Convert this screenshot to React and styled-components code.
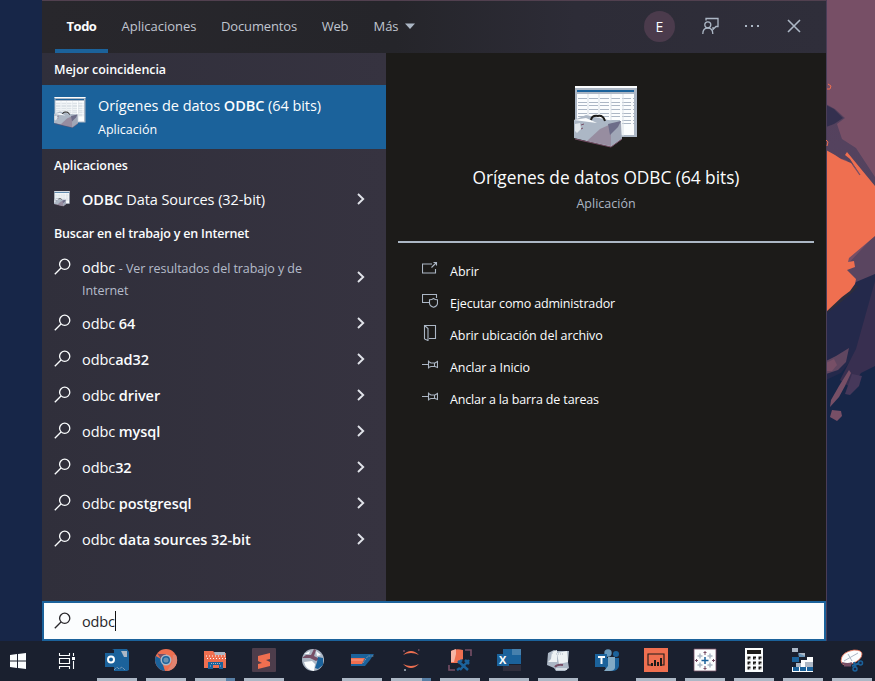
import React from "react";
import styled, { createGlobalStyle } from "styled-components";

const c = {
  ink: "#1c1b19", panel: "#302f3b", blue: "#1b629b", navy: "#172648",
  plum: "#774f66", coral: "#ef6f50", mist: "#acb7c5", white: "#fbfdfe",
};

const Global = createGlobalStyle`
  * { box-sizing: border-box; }
  body { margin: 0; overflow: hidden; background: ${c.navy}; font-family: "Open Sans", "Noto Sans", sans-serif; }
  svg { display: block; flex: none; }
`;

const Desktop = styled.div`
  width: 875px; height: 681px; display: grid; grid-template-rows: 641px 40px;
  background: ${c.navy}; color: ${c.white};
`;
const Stage = styled.div`
  display: grid; grid-template-columns: 42px 784px 49px;
`;
const SearchWindow = styled.section`
  grid-column: 2; display: grid; grid-template-rows: 52px 548px 40px;
  border-top: 1px solid #51404f;
`;
const Header = styled.header`
  display: flex; justify-content: space-between;
  background: linear-gradient(90deg, #28272c 0, #25252a 45%, #2d2c37 68%, #2f2e3a 100%);
`;
const Tabs = styled.nav`display: flex; padding-left: 13px;`;
const Tab = styled.div`
  display: flex; align-items: center; justify-content: center; gap: 6px;
  width: ${p => p.$w}px; margin-right: ${p => p.$gap || 0}px; padding-bottom: 2px;
  font-size: 13px; letter-spacing: ${p => p.$ls || 0}px; white-space: nowrap;
  font-weight: ${p => (p.$active ? 700 : 400)}; color: ${p => (p.$active ? c.white : "#c0c5d0")};
  box-shadow: ${p => (p.$active ? `inset 0 -4px ${c.blue}` : "none")};
`;
const Tools = styled.div`display: flex; align-items: center; padding: 0 25px 2px 0;`;
const Avatar = styled.div`
  width: 31px; height: 31px; margin-right: 27px; border-radius: 50%; background: #4b3b4c;
  display: grid; place-items: center; font-size: 14px;
`;
const ToolIcon = styled.svg`margin-right: ${p => p.$gap || 0}px;`;

const Content = styled.div`display: grid; grid-template-columns: 344px 440px;`;
const Results = styled.div`background: linear-gradient(90deg, #302f3b, #363340);`;
const Heading = styled.h2`
  margin: 0; height: 32px; padding: 0 12px; display: flex; align-items: center;
  font-size: 12.5px; font-weight: 600; letter-spacing: ${p => p.$ls || 0}px; white-space: nowrap;
`;
const BestMatch = styled.div`
  height: 64px; padding: 8px 12px; display: flex; gap: 12px; background: ${c.blue};
  > svg { margin-top: 4px; }
`;
const MatchText = styled.div`padding-top: 1px; white-space: nowrap;`;
const MatchTitle = styled.div`font-size: 14.5px; line-height: 24px; letter-spacing: -0.06px;
  b { font-weight: 600; }`;
const MatchKind = styled.div`font-size: 12.5px; line-height: 24px;`;
const Row = styled.div`
  height: ${p => (p.$tall ? 56 : 36)}px; display: flex; align-items: center;
  padding: 0 21px 0 12px; font-size: 14.5px;
`;
const RowIcon = styled.div`width: 28px; align-self: ${p => (p.$top ? "flex-start" : "center")};
  padding-top: ${p => (p.$top ? 9 : 0)}px;`;
const RowText = styled.div`
  flex: 1; line-height: 21px; white-space: nowrap; letter-spacing: -0.07px;
  padding-top: ${p => (p.$low ? 3 : 0)}px;
  b { font-weight: 600; }
`;
const Hint = styled.span`font-size: 12.5px; color: #b5bcca; letter-spacing: -0.06px;`;

const Details = styled.div`
  background: ${c.ink}; padding: 33px 12px 0; display: flex; flex-direction: column; align-items: stretch;
`;
const Hero = styled.div`
  height: 155px; display: flex; flex-direction: column; align-items: center; white-space: nowrap;
`;
const HeroTitle = styled.div`margin-top: 14px; font-size: 17.3px; line-height: 28px; letter-spacing: -0.02px;`;
const HeroKind = styled.div`font-size: 12.5px; line-height: 23px; color: ${c.mist};`;
const Divider = styled.div`height: 2px; background: ${c.mist};`;
const Actions = styled.div`padding: 12px 0 0 24px;`;
const Action = styled.div`
  height: 32px; display: flex; align-items: center; gap: 12px; font-size: 12.5px;
  letter-spacing: ${p => p.$ls || 0}px; white-space: nowrap;
  svg { margin-top: -4px; }
`;

const SearchBar = styled.div`
  display: flex; align-items: center; padding-left: 10px;
  border: 2px solid ${c.blue}; background: ${c.white}; color: #28272b; font-size: 14.5px;
`;
const Query = styled.span`padding-left: 10px; letter-spacing: -0.15px;`;
const Caret = styled.span`width: 1px; height: 20px; background: #111;`;

const Taskbar = styled.footer`display: flex; background: #1a202f;`;
const SystemButton = styled.div`
  width: ${p => p.$w}px; display: grid; place-items: center;
`;
const AppButton = styled.div`
  width: 40px; height: 40px; margin-right: 9px; flex: none;
  display: grid; grid-template-rows: 37px 3px; justify-items: center;
  svg { margin-top: 7px; }
`;
const OpenMark = styled.div`
  width: 40px; background: ${p => (p.$split
    ? `linear-gradient(90deg, ${c.mist} 31px, #587fa5 31px)`
    : c.mist)};
`;

const Magnifier = ({ color = c.white }) => (
  <svg width="18" height="18" viewBox="0 0 18 18" fill="none" stroke={color} strokeWidth="1.3">
    <circle cx="10.7" cy="6.3" r="5.1" /><path d="M7 10 L.8 16.2" />
  </svg>
);
const Chevron = () => (
  <svg width="8" height="12" viewBox="0 0 8 12" fill="none" stroke="#e1e3e9" strokeWidth="1.9">
    <path d="M1 1 L6.2 6 L1 11" />
  </svg>
);

const OdbcIcon = ({ size }) => (
  <svg width={size} height={size} viewBox="0 0 64 64">
    <path d="M1 0h62v51H1z" fill={c.mist} />
    <path d="M1 0h62v2H1zM3 8h57v41H3z" fill={c.white} />
    <path d="M3 4h57v2H3z" fill={c.blue} />
    <path d="M4 12.5h56M4 16.5h56M4 19.5h56M4 23.5h56M4 27.5h56M4 30.5h56M4 34.5h56M4 37.5h56" stroke={c.mist} strokeWidth="1" strokeDasharray="9 2" />
    <path d="M14 8v42M25 8v42M37 8v42M49 8v42" stroke="#dbe1e7" />
    <path d="M0 34L12 29 34 34 47 35 48 53 37 61 0 52z" fill={c.mist} />
    <path d="M0 34L12 32 23 37 15 36z" fill={c.white} />
    <path d="M1 38l5-1 1 6-4 4-2-2z" fill="#e2e7ec" />
    <path d="M26 43L37 38 37 60 13 55z" fill="#978da0" />
    <path d="M37 38L47 35V53L37 60z" fill="#a0a7b7" />
    <path d="M34 38L47 35 44 41 36 49z" fill="#6d6d89" />
    <path d="M7 39l3-1M7 43l2-1" fill="none" stroke={c.plum} />
    <path d="M17 34Q18 29 24 30 29 29 31 35" fill="none" stroke={c.ink} strokeWidth="2" />
    <path d="M1 53L37 61 48 53" fill="none" stroke={c.plum} />
  </svg>
);

const actionDrawings = {
  open: <><path d="M10 3H.5v9h13V8M9.5 6.5L14.5 1.5M11.5 1.5h3v3" /></>,
  admin: <><path d="M7 9.5H.5v-8h14V5" /><path d="M11.5 5.5q2 1.5 4 1.3V10q0 3-4 4.3Q7.5 13 7.5 10V6.8q2 .2 4-1.3z" /></>,
  folder: <><path d="M2.5 14V.5h11v13H7M2.5.5l3.5 3v12L2.5 14" /></>,
  pin: <><path d="M0 7.5h6.5M6.5 3.5v8M6.5 4.5L9 6h4l2.5-1.5v6L13 9.5H9l-2.5 1M12.5 6v3" /></>,
};
const ActionIcon = ({ kind }) => (
  <svg width="16" height="16" viewBox="0 0 16 16" fill="none" stroke={c.mist} strokeWidth="1.1">{actionDrawings[kind]}</svg>
);

const actions = [
  ["open", "Abrir", 0], ["admin", "Ejecutar como administrador", -0.16],
  ["folder", "Abrir ubicación del archivo", -0.08], ["pin", "Anclar a Inicio", -0.08],
  ["pin", "Anclar a la barra de tareas", -0.15],
];
const suggestions = [
  ["odbc ", "64"], ["odbc", "ad32"], ["odbc ", "driver"], ["odbc ", "mysql"],
  ["odbc", "32"], ["odbc ", "postgresql"], ["odbc ", "data sources 32-bit"],
];

const Letter = styled.text`font: 700 ${p => p.$s || 10}px "Open Sans", sans-serif; fill: ${c.white};`;

const apps = [
  { open: true, art: <>
    <path d="M7 0h15l2 3v18l-2 1H9V1z" fill={c.blue} /><path d="M16 2h6v6h-3z" fill={c.mist} />
    <path d="M9 21l3-3 2 2 3-2 3 3" fill="none" stroke={c.mist} strokeDasharray="1 1" />
    <path d="M0 4h12v14H0z" fill={c.blue} /><circle cx="6" cy="10.5" r="3" fill="none" stroke={c.white} strokeWidth="2" /></> },
  { open: true, art: <>
    <circle cx="12" cy="11" r="11" fill={c.coral} /><path d="M1.8 7L7 10l4 12A11 11 0 0 1 1.8 7" fill={c.blue} />
    <path d="M3 4l4 6 5-4V5H5z" fill={c.plum} /><path d="M13 22l5-8 1-8h3a11 11 0 0 1-9 16" fill="#e08471" />
    <circle cx="12" cy="11" r="5.5" fill={c.mist} /><circle cx="12" cy="11" r="4" fill={c.blue} />
    <circle cx="12" cy="11" r="2.6" fill="#6890b2" /></> },
  { open: true, split: true, art: <>
    <path d="M1 2h9l2 2h11v15H1z" fill={c.coral} /><path d="M11 3h11v3H12z" fill={c.mist} />
    <path d="M3 7h19M4 9.5h19" stroke={c.white} strokeDasharray="1 2" />
    <path d="M5 13h15v7h-4v-4h-6v4H5z" fill={c.blue} /><path d="M8 14.5h10M7 17h2M17 17h2" stroke={c.mist} strokeDasharray="1 1" /></> },
  { open: true, art: <>
    <rect y="-1" width="24" height="24" rx="1" fill="#4d3d4b" /><path d="M6 7l12-3v6l-4 1 4 2v4L6 20v-5l4-1-4-2z" fill={c.coral} /></> },
  { art: <>
    <circle cx="12" cy="11" r="11" fill={c.mist} /><path d="M1 9l4-3h5l3-6 2 1-2 6 6 3-4 2-6-3z" fill={c.plum} />
    <path d="M17 8l5 1v7l-5 4-3-1 2-6z" fill={c.blue} /><path d="M3 13l8-1 3 3-1 7Q5 21 3 13M15 2l5 4-4 1z" fill={c.white} />
    <path d="M3 5l6-3-1 3z" fill={c.white} /></> },
  { open: true, art: <>
    <path d="M1 5h23l-4 6-5 6H1z" fill={c.blue} /><path d="M1 9h14l-3 6H1z" fill={c.coral} /><path d="M1 11h12" stroke="#f4a08a" />
    <path d="M13 14l5-7h6" fill="none" stroke="#7796ae" strokeDasharray="2 1" /></> },
  { open: true, split: true, art: <>
    <path d="M4 6Q12-2 20 6q-8-4-16 0zM4 15q8 4 16 0-8 8-16 0z" fill={c.coral} />
    <path d="M4 2h2M19 1h1.5" stroke={c.plum} strokeWidth="1.5" /><path d="M5 21h2" stroke={c.mist} strokeWidth="1.5" /></> },
  { open: true, art: <>
    <path d="M3 2Q8-1 15 1v9l-5 4H3z" fill={c.coral} /><path d="M3 2l5-2v5l-2 8H3z" fill="#f6b5a5" />
    <path d="M17 1h6v6M1 16v5h6" fill="none" stroke={c.plum} strokeWidth="1.6" />
    <path d="M10 12l10 9M21 11l-9 10M10 14l4-3M12 19l-3 2M17 11l4 4" stroke={c.blue} strokeWidth="2.5" /></> },
  { open: true, art: <>
    <path d="M6 0h18v15H6z" fill={c.blue} /><path d="M15 0h9v6h-9z" fill="#4780ad" /><path d="M6 16h18v6H6z" fill="#302f3d" />
    <path d="M0 5h12v12H0z" fill={c.blue} /><Letter x="2" y="15.2" $s="11">X</Letter></> },
  { open: true, art: <>
    <path d="M2 4l6-3 3 1h12l-1 11 1 6-4 3H10l-2-3-7-3z" fill={c.mist} /><path d="M6 3l5-2v12H2l3-3zM11 4l10-2 1 11-9 2z" fill="#eef2f4" />
    <path d="M4 4h4M10 5h8" stroke={c.mist} strokeDasharray="1 1" />
    <path d="M9 18q2-3 8-2" stroke={c.plum} strokeWidth="2" fill="none" /><path d="M10 20h11" stroke="#d4dce3" strokeWidth="2" /></> },
  { art: <>
    <circle cx="13" cy="4" r="3.7" fill="#6799bd" /><circle cx="21" cy="5" r="3" fill={c.blue} /><path d="M9 9h15v8q-1 5-7 5t-8-6z" fill={c.blue} />
    <path d="M13 8h7v11q-1 3-5 3H9l4-5z" fill="#82aac5" /><path d="M0 5h12v13H0z" fill={c.blue} /><path d="M3 8h7M6.5 8v7" stroke={c.white} strokeWidth="2" /></> },
  { open: true, art: <>
    <path d="M0-1h24v24H0z" fill={c.coral} /><path d="M7 16H4V5h16v11h-2" fill="none" stroke={c.ink} strokeWidth="1.1" />
    <path d="M8 17v-3M11 17v-6M14 17v-4M17 17V9" stroke={c.ink} strokeWidth="2" /></> },
  { open: true, art: <>
    <path d="M1 0h22v22H1z" fill={c.white} stroke={c.plum} strokeWidth=".8" /><path d="M12 8v7M8.5 11.5h7" stroke={c.blue} strokeWidth="1.5" />
    <path d="M12 2v4M10.5 3.5h3M12 17v4M10.5 19.5h3M2 11.5h3M3.5 10v3M19 11.5h3M20.5 10v3" stroke={c.plum} strokeWidth="1" />
    <path d="M7 4.5v5M4.5 7h5M17 4.5v5M14.5 7h5M7 13.5v5M4.5 16h5M17 13.5v5M14.5 16h5" stroke={c.mist} strokeWidth="1.5" /></> },
  { open: true, art: <>
    <path d="M3-1h18v24H3z" fill={c.white} /><path d="M5 1h14v4H5z" fill={c.ink} />
    {[7.5, 12.5, 17.5].map(y => <path key={y} d={`M5.5 ${y}h3v3h-3zM11 ${y}h3v3h-3zM16.5 ${y}h3v3h-3z`} fill={c.ink} />)}
    {[10, 15, 20].map(y => <path key={y} d={`M7 ${y}h2M12.5 ${y}h2M18 ${y}h2`} stroke={c.white} />)}</> },
  { open: true, art: <>
    <path d="M1-1h6v4H1zM8 4h6v4H8z" fill={c.mist} /><path d="M7 4l7 3v1H8z" fill="#6895b9" /><path d="M1 8h7v5H1z" fill={c.blue} />
    <path d="M5 14h5v-3h6V8h6v15H1v-5h4z" fill={c.white} /><path d="M14 13h8v5h-8zM5 14h5v4H5z" fill={c.mist} />
    <path d="M2 18h6v4H2zM9 18h6v4H9zM16 18h6v4h-6z" fill={c.blue} /></> },
  { open: true, art: <>
    <path d="M1 12Q1 3 14 1q8 0 8 4 0 6-11 10-9 3-10-3z" fill={c.white} stroke={c.coral} strokeWidth=".8" />
    <path d="M4 12l14-8M8 5l4 7" stroke={c.mist} />
    <path d="M2 14q6 2 10 0M4 16.5h7" fill="none" stroke={c.plum} strokeWidth="2" /><path d="M14 13l2 7M12 17l8-3" stroke={c.blue} strokeWidth="2" />
    <circle cx="20.5" cy="14" r="2" fill={c.navy} stroke={c.blue} strokeWidth="1.5" /><circle cx="15" cy="20" r="2" fill={c.navy} stroke={c.blue} strokeWidth="1.5" /></> },
];

const Wallpaper = () => (
  <svg width="49" height="641" viewBox="0 0 49 641">
    <defs>
      <linearGradient id="slope" x2="0" y2="1"><stop stopColor={c.plum} /><stop offset=".6" stopColor="#493c57" /><stop offset="1" stopColor={c.navy} /></linearGradient>
      <linearGradient id="shade" x2="0" y2="1"><stop stopColor="#55415d" /><stop offset="1" stopColor="#53435f" /></linearGradient>
    </defs>
    <path d="M0 0h49v641H0z" fill={c.navy} />
    <path d="M0 0h49v290H0z" fill={c.plum} />
    <path d="M0 104l9 5 10 9-8 6 5 15 14 9 19 29v12L20 160 0 155z" fill="url(#shade)" />
    <path d="M0 105l8 4 9 9-9 6-8 3z" fill="#34304f" />
    <path d="M49 235v48l-22 14-8-30z" fill="#5a4560" />
    <path d="M30 284l19-7v364H0V314z" fill="url(#navyFade)" />
    <path d="M30 282l19-8v50q-11 15-20 31L15 373 0 380v-66z" fill="#24294b" />
    <path d="M49 281v85l-14 7-10 15-11-8 16-31z" fill="#382f50" />
    <path d="M0 312l20-16 11-10" stroke="#2d2d3c" strokeWidth="3" fill="none" />
    <path d="M0 150l9 5 6 4 10 4 8 10-9-14-5-4 2-3 28 34v50l-26 22-1 4 6-1 1 6-8 3 9 9-1 5-5 7-8 6-16 15z" fill={c.coral} />
    <path d="M27 165l7 10" stroke={c.plum} strokeWidth="1.3" />
    <path d="M0 361l10-5 13-8-3 14-8 8-12 4z" fill="#604660" />
    <path d="M0 363l8-4 3 6-5 6H0z" fill={c.plum} />
    <path d="M23 370l2 3-6 13-6 11-9 10 1-7 8-14zM6 410l9 1 1 5-5 5-7-4z" fill={c.plum} />
    <path d="M26 374l10 2-3 10-9 9-5-1z" fill="#46385a" />
    <path d="M.5 0v641" stroke="#493d57" />
    <path d="M2 84l3 2-1 3H1M0 140l2 2-1 4" stroke={c.coral} fill="none" />
  </svg>
);

export default function App() {
  return (
    <><Global /><Desktop>
      <Stage>
        <SearchWindow>
          <Header>
            <Tabs>
              <Tab $active $w={53} $gap={14} $ls={-0.5}>Todo</Tab>
              <Tab $w={74} $gap={26}>Aplicaciones</Tab>
              <Tab $w={74} $gap={26} $ls={-0.15}>Documentos</Tab>
              <Tab $w={26} $gap={26} $ls={-0.2}>Web</Tab>
              <Tab $w={40}>Más <svg width="10" height="6" viewBox="0 0 10 6"><path d="M0 .5h10L5 6z" fill={c.mist} /></svg></Tab>
            </Tabs>
            <Tools>
              <Avatar>E</Avatar>
              <ToolIcon $gap={26} width="17" height="18" viewBox="0 0 17 18" fill="none" stroke={c.mist} strokeWidth="1.3">
                <path d="M4 3.5V1.5h12v8h-2l-3 3V10" /><circle cx="5.8" cy="7.8" r="3" /><path d="M.8 17q0-6 5-6t5 6" />
              </ToolIcon>
              <ToolIcon $gap={27} width="15" height="2" viewBox="0 0 15 2"><path d="M0 0h2v2H0zM6 0h2v2H6zM12 0h2v2h-2z" fill={c.mist} /></ToolIcon>
              <ToolIcon width="14" height="14" viewBox="0 0 14 14" stroke={c.mist} strokeWidth="1.6"><path d="M1 1l12 12M13 1L1 13" /></ToolIcon>
            </Tools>
          </Header>
          <Content>
            <Results>
              <Heading $ls={-0.07}>Mejor coincidencia</Heading>
              <BestMatch>
                <OdbcIcon size={32} />
                <MatchText><MatchTitle>Orígenes de datos <b>ODBC</b> (64 bits)</MatchTitle><MatchKind>Aplicación</MatchKind></MatchText>
              </BestMatch>
              <Heading $ls={-0.1}>Aplicaciones</Heading>
              <Row><RowIcon><OdbcIcon size={16} /></RowIcon><RowText><b>ODBC</b> Data Sources (32-bit)</RowText><Chevron /></Row>
              <Heading $ls={-0.19}>Buscar en el trabajo y en Internet</Heading>
              <Row $tall><RowIcon $top><Magnifier /></RowIcon>
                <RowText $low>odbc <Hint>- Ver resultados del trabajo y de<br />Internet</Hint></RowText><Chevron /></Row>
              {suggestions.map(([a, b]) => (
                <Row key={b}><RowIcon><Magnifier /></RowIcon><RowText>{a}<b>{b}</b></RowText><Chevron /></Row>
              ))}
            </Results>
            <Details>
              <Hero><OdbcIcon size={64} />
                <HeroTitle>Orígenes de datos ODBC (64 bits)</HeroTitle><HeroKind>Aplicación</HeroKind></Hero>
              <Divider />
              <Actions>{actions.map(([k, t, ls]) => <Action key={t} $ls={ls}><ActionIcon kind={k} />{t}</Action>)}</Actions>
            </Details>
          </Content>
          <SearchBar><Magnifier color="#28272b" /><Query>odbc</Query><Caret /></SearchBar>
        </SearchWindow>
        <Wallpaper />
      </Stage>
      <Taskbar>
        <SystemButton $w={36}><svg width="16" height="16" viewBox="0 0 16 16"><path d="M0 2l7-1v6.5H0zM8 1l8-1v7.5H8zM0 8.5h7V15l-7-1zM8 8.5h8V16l-8-1z" fill={c.white} /></svg></SystemButton>
        <SystemButton $w={61}><svg width="17" height="16" viewBox="0 0 17 16" fill="none" stroke={c.white} strokeWidth="1.1"><path d="M1.5 0v2.5h10V0M1.5 5.5h10v5h-10zM1.5 16v-2.5h10V16M15.5 0v3M15.5 8v8" /><path d="M14 4h3v3h-3z" fill={c.white} stroke="none" /></svg></SystemButton>
        {apps.map((app, i) => (
          <AppButton key={i}>
            <svg width="24" height="24" viewBox="0 -1 24 24">{app.art}</svg>
            {app.open && <OpenMark $split={app.split} />}
          </AppButton>
        ))}
      </Taskbar>
    </Desktop></>
  );
}
